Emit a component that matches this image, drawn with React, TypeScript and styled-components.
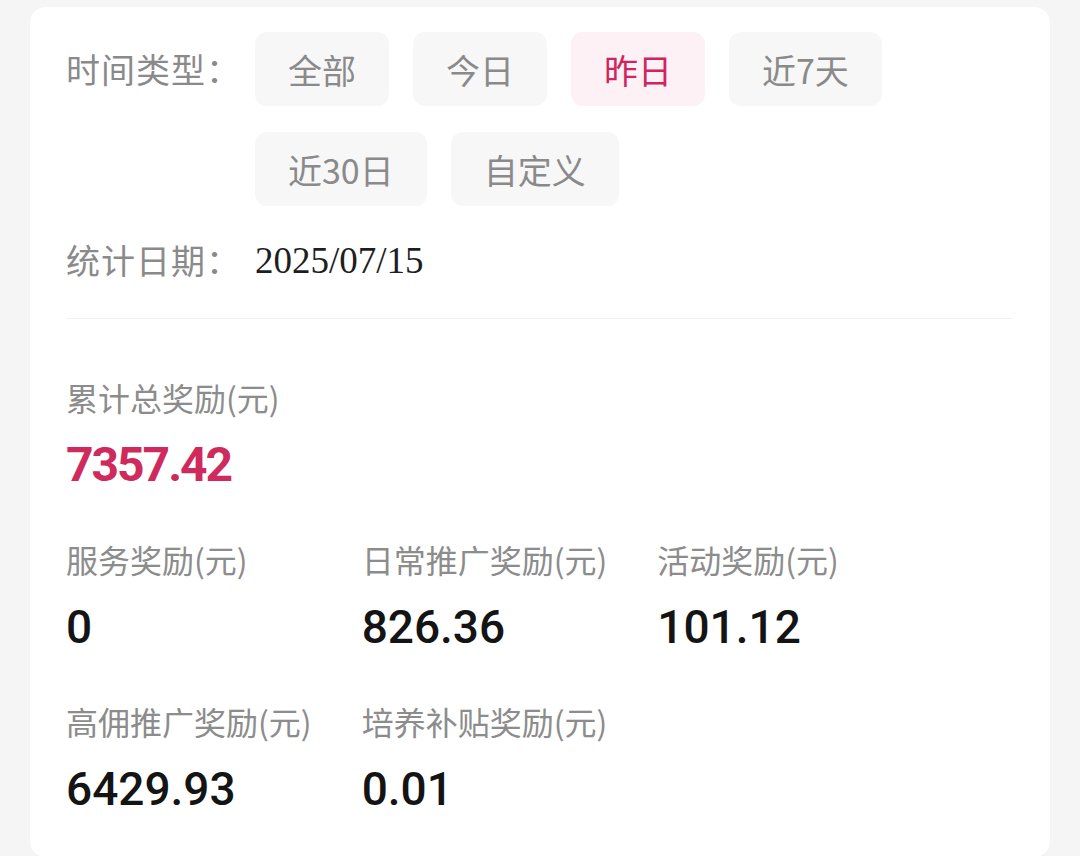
import React, { useState } from 'react';
import styled, { createGlobalStyle } from 'styled-components';

const GlobalStyle = createGlobalStyle`
  html, body {
    margin: 0;
    padding: 0;
    background: #f5f5f5;
  }
  body {
    font-family: 'Noto Sans CJK SC', 'Noto Sans', sans-serif;
  }
`;

const Page = styled.div`
  width: 1080px;
  height: 856px;
  overflow: hidden;
  background: #f5f5f5;
  padding-top: 7px;
  box-sizing: border-box;
`;

const Card = styled.div`
  margin: 0 30px;
  background: #ffffff;
  border-radius: 16px;
  padding: 25px 38px 40px 36px;
  box-sizing: border-box;
  min-height: 849px;
`;

const FilterRow = styled.div`
  display: flex;
  align-items: flex-start;
`;

const FieldLabel = styled.div`
  width: 189px;
  flex-shrink: 0;
  font-size: 34px;
  line-height: 74px;
  color: #8a8a8a;
  white-space: nowrap;
  letter-spacing: 1px;
`;

const ChipWrap = styled.div`
  display: flex;
  flex-wrap: wrap;
  gap: 26px 24px;
  width: 640px;
`;

const Chip = styled.button<{ $active?: boolean }>`
  height: 74px;
  padding: 0 33px;
  border: none;
  border-radius: 12px;
  font-family: 'Noto Sans CJK SC', sans-serif;
  font-size: 34px;
  color: ${(p) => (p.$active ? '#d0245f' : '#8a8a8a')};
  background: ${(p) => (p.$active ? '#fef1f5' : '#f7f7f7')};
  cursor: pointer;
`;

const DateRow = styled.div`
  display: flex;
  align-items: center;
  height: 50px;
  margin-top: 29px;
`;

const DateValue = styled.span`
  font-family: 'Liberation Serif', serif;
  font-size: 37px;
  color: #1e1e1e;
`;

const Divider = styled.div`
  height: 1px;
  background: #f0f0f0;
  margin-top: 33px;
`;

const Stat = styled.div`
  display: flex;
  flex-direction: column;
  gap: 20px;
`;

const StatLabel = styled.div`
  font-size: 32px;
  line-height: 40px;
  color: #8c8c8c;
  white-space: nowrap;
`;

const StatValue = styled.div<{ $accent?: boolean }>`
  font-family: Roboto, 'Liberation Sans', sans-serif;
  font-size: ${(p) => (p.$accent ? '48px' : '46px')};
  font-weight: ${(p) => (p.$accent ? 700 : 500)};
  letter-spacing: ${(p) => (p.$accent ? '-2px' : '0px')};
  line-height: 56px;
  color: ${(p) => (p.$accent ? '#cf2a5e' : '#141414')};
`;

const TotalBlock = styled(Stat)`
  margin-top: 58px;
`;

const StatGrid = styled.div`
  display: grid;
  grid-template-columns: auto auto auto;
  justify-content: start;
  column-gap: 50px;
  row-gap: 46px;
  margin-top: 46px;
`;

const ranges = ['全部', '今日', '昨日', '近7天', '近30日', '自定义'];

const stats = [
  { label: '服务奖励(元)', value: '0' },
  { label: '日常推广奖励(元)', value: '826.36' },
  { label: '活动奖励(元)', value: '101.12' },
  { label: '高佣推广奖励(元)', value: '6429.93' },
  { label: '培养补贴奖励(元)', value: '0.01' },
];

export default function App() {
  const [range, setRange] = useState('昨日');

  return (
    <Page>
      <GlobalStyle />
      <Card>
        <FilterRow>
          <FieldLabel>时间类型：</FieldLabel>
          <ChipWrap>
            {ranges.map((r) => (
              <Chip key={r} $active={r === range} onClick={() => setRange(r)}>
                {r}
              </Chip>
            ))}
          </ChipWrap>
        </FilterRow>

        <DateRow>
          <FieldLabel>统计日期：</FieldLabel>
          <DateValue>2025/07/15</DateValue>
        </DateRow>

        <Divider />

        <TotalBlock>
          <StatLabel>累计总奖励(元)</StatLabel>
          <StatValue $accent>7357.42</StatValue>
        </TotalBlock>

        <StatGrid>
          {stats.map((s) => (
            <Stat key={s.label}>
              <StatLabel>{s.label}</StatLabel>
              <StatValue>{s.value}</StatValue>
            </Stat>
          ))}
        </StatGrid>
      </Card>
    </Page>
  );
}
